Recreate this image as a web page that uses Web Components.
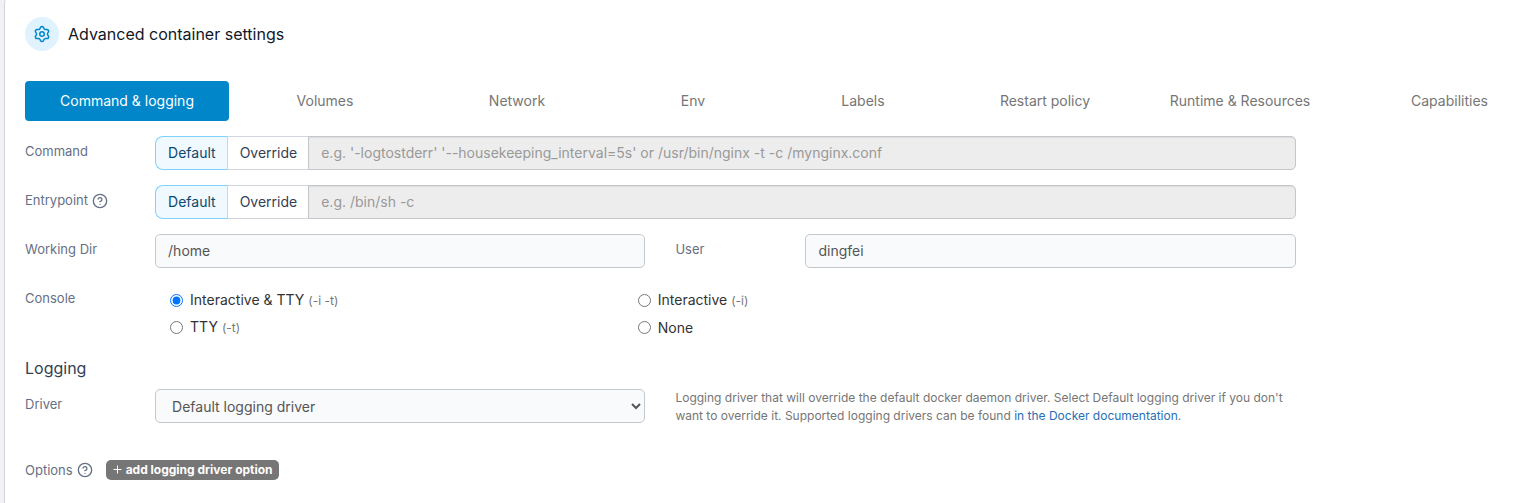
<!DOCTYPE html>
<html lang="en">
<head>
<meta charset="utf-8">
<meta name="viewport" content="width=device-width, initial-scale=1">
<title>Advanced container settings</title>
<style>
  html { --blue: #0086c9; --muted: #767676; --label: #667085; --line: #c4c7cc; --field: #f9fafb; }
  body {
    margin: 0;
    background: #f2f2f4;
    color: #333;
    font: 14px/20px Inter, "Liberation Sans", sans-serif;
    overflow: hidden;
  }
</style>
</head>
<body>
<settings-card>
  <section-title slot="title">Advanced container settings</section-title>
  <tab-strip></tab-strip>
  <form-row><override-field label="Command" placeholder="e.g. '-logtostderr' '--housekeeping_interval=5s' or /usr/bin/nginx -t -c /mynginx.conf"></override-field></form-row>
  <form-row><override-field label="Entrypoint" help placeholder="e.g. /bin/sh -c"></override-field></form-row>
  <form-row>
    <text-field label="Working Dir" value="/home"></text-field>
    <text-field label="User" value="dingfei"></text-field>
  </form-row>
  <form-row><console-field></console-field></form-row>
  <sub-title>Logging</sub-title>
  <form-row>
    <driver-field></driver-field>
    <help-text>Logging driver that will override the default docker daemon driver. Select Default logging driver if you don't want to override it. Supported logging drivers can be found <a href="#docs">in the Docker documentation</a>.</help-text>
  </form-row>
  <options-field></options-field>
</settings-card>

<script>
const define = (name, render, after) => customElements.define(name, class extends HTMLElement {
  connectedCallback() {
    if (this.shadowRoot) return;
    const t = document.createElement('template');
    t.innerHTML = '<style>*{box-sizing:border-box}</style>' + render(this);
    this.attachShadow({ mode: 'open' }).append(t.content.cloneNode(true));
    if (after) after(this.shadowRoot);
  }
});

const fieldStyle = `
  label, .label { font-size: 13px; line-height: 20px; color: var(--label); padding: 5px 15px 0; display: flex; align-items: flex-start; gap: 4px; white-space: nowrap; }
  input:not([type=radio]), select { font: inherit; color: #555; height: 34px; width: 100%; min-width: 0; background: var(--field); border: 1px solid var(--line); border-radius: 5px; padding: 5px 12px 7px; margin: 0; }
  select { padding: 6px 12px; }
  .control { padding: 0 15px; min-width: 0; }
`;

define('help-icon', () => `
  <style>:host{display:block;width:16px;height:16px} svg{display:block}</style>
  <svg width="16" height="16" viewBox="0 0 24 24" fill="none" stroke="#667085" stroke-width="2" stroke-linecap="round" stroke-linejoin="round" aria-hidden="true">
    <circle cx="12" cy="12" r="10"/><path d="M9.09 9a3 3 0 0 1 5.83 1c0 2-3 3-3 3"/><path d="M12 17h.01"/>
  </svg>`);

define('settings-card', () => `
  <style>
    :host{display:block;background:#fff;border:1px solid #d0d5dd;border-radius:8px;margin:-5px -52px 0 4px;padding:21px 20px 60px}
  </style>
  <slot name="title"></slot><slot></slot>`);

define('section-title', () => `
  <style>
    :host{display:flex;align-items:center;gap:9px;color:#101828;font-size:16px;line-height:24px;margin-bottom:30px}
    .badge{width:34px;height:34px;border-radius:50%;background:#e0f2fe;display:grid;place-items:center}
    h2{margin:0;font:inherit}
  </style>
  <span class="badge"><svg width="18" height="18" viewBox="0 0 24 24" fill="none" stroke="#0086c9" stroke-width="2" stroke-linecap="round" stroke-linejoin="round" aria-hidden="true">
    <path d="M9.400 19.400 10 20.700a2.300 2.300 0 0 0 4 0l.6-1.300a2.400 2.400 0 0 1 2.500-1.400l1.400.1a2.200 2.200 0 0 0 2-3.400l-.8-1.200a2.400 2.400 0 0 1 0-2.900l.8-1.200a2.200 2.200 0 0 0-2-3.400l-1.400.1a2.400 2.400 0 0 1-2.500-1.400L14 3.300a2.300 2.300 0 0 0-4 0l-.6 1.400A2.400 2.400 0 0 1 6.900 6.100L5.500 6a2.200 2.200 0 0 0-2 3.400l.8 1.200a2.400 2.400 0 0 1 0 2.900l-.8 1.200a2.200 2.200 0 0 0 2 3.400l1.400-.1a2.400 2.400 0 0 1 2.500 1.400Z"/><circle cx="12" cy="12" r="3"/>
  </svg></span>
  <h2><slot></slot></h2>`);

define('tab-strip', () => `
  <style>
    :host{display:grid;grid-template-columns:204fr 192fr 192fr 160fr 180fr 184fr 206fr 213fr;margin-bottom:15px}
    button{font:inherit;height:40px;padding:0;border:0;background:none;color:var(--muted);border-radius:4px;white-space:nowrap}
    button[aria-selected=true]{background:var(--blue);color:#fff}
  </style>` + ['Command & logging','Volumes','Network','Env','Labels','Restart policy','Runtime & Resources','Capabilities']
    .map((t, i) => `<button type="button" role="tab" aria-selected="${i === 0}">${t.replace('&', '&amp;')}</button>`).join(''),
  root => root.host.setAttribute('role', 'tablist'));

define('form-row', () => `
  <style>:host{display:grid;grid-template-columns:repeat(12,minmax(0,1fr));margin:0 -15px 15px}</style><slot></slot>`);

define('override-field', h => `
  <style>${fieldStyle}
    :host{grid-column:span 10;display:grid;grid-template-columns:minmax(0,1fr) minmax(0,9fr)}
    .group{display:flex}
    button{font:inherit;height:34px;padding:0 11px 0 12px;border:1px solid #d0d5dd;background:#fff;color:#344054;margin-left:-1px}
    button[aria-pressed=true]{margin:0;background:#f0f9ff;border-color:#7cd4fd;border-right-color:#d0d5dd;color:#0b4a6f;border-radius:8px 0 0 8px}
    .group input{flex:1;width:auto;background:#ededed;border-radius:0 5px 5px 0;margin-left:-1px;box-shadow:inset 0 1px 1px rgba(0,0,0,.075)}
    input::placeholder{color:#999;opacity:1}
    help-icon{margin-top:3px}
  </style>
  <label for="f">${h.getAttribute('label')}${h.hasAttribute('help') ? '<help-icon></help-icon>' : ''}</label>
  <div class="control group"><button type="button" aria-pressed="true">Default</button><button type="button" aria-pressed="false">Override</button><input id="f" disabled></div>`,
  root => { root.querySelector('input').placeholder = root.host.getAttribute('placeholder'); });

define('text-field', h => `
  <style>${fieldStyle}
    :host{grid-column:span 5;display:grid;grid-template-columns:minmax(0,1fr) minmax(0,4fr)}
  </style>
  <label for="f">${h.getAttribute('label')}</label>
  <div class="control"><input id="f" type="text" value="${h.getAttribute('value')}"></div>`);

define('console-field', () => `
  <style>${fieldStyle}
    :host{grid-column:span 10;display:grid;grid-template-columns:minmax(0,1fr) minmax(0,9fr);margin-bottom:3px}
    .radios{display:grid;grid-template-columns:41% 41%;row-gap:6px;padding-top:7px}
    .radios label{font-size:14px;color:#333;padding:0 15px;gap:7px;align-items:center}
    .radios input{margin:0;width:13px;height:13px}
    small{font-size:12px;color:var(--muted)}
  </style>
  <span class="label" id="g">Console</span>
  <div class="control radios" role="radiogroup" aria-labelledby="g">
    <label><input type="radio" name="console" checked><span>Interactive &amp; TTY <small>(-i -t)</small></span></label>
    <label><input type="radio" name="console"><span>Interactive <small>(-i)</small></span></label>
    <label><input type="radio" name="console"><span>TTY <small>(-t)</small></span></label>
    <label><input type="radio" name="console"><span>None</span></label>
  </div>`);

define('sub-title', () => `
  <style>:host{display:block;font-size:16px;line-height:24px;color:#344054;margin-bottom:9px} h3{margin:0;font:inherit}</style>
  <h3><slot></slot></h3>`);

define('driver-field', () => `
  <style>${fieldStyle}
    :host{grid-column:span 5;display:grid;grid-template-columns:minmax(0,1fr) minmax(0,4fr)}
  </style>
  <label for="f">Driver</label>
  <div class="control"><select id="f"><option>Default logging driver</option></select></div>`);

define('help-text', () => `
  <style>
    :host{grid-column:span 5;padding:0 15px;font-size:12px;line-height:18px;color:var(--muted)}
    ::slotted(a){color:#286fb4;text-decoration:none}
  </style>
  <slot></slot>`);

define('options-field', () => `
  <style>
    :host{display:flex;align-items:center;margin-top:35px;font-size:13px;color:var(--label)}
    help-icon{margin:0 13px 0 4px}
    button{display:flex;align-items:center;gap:4px;height:20px;border:0;border-radius:5px;background:var(--muted);color:#fff;font:700 12px/20px Inter,"Liberation Sans",sans-serif;padding:0 6px}
    svg{margin-bottom:2px}
  </style>
  <span>Options</span><help-icon></help-icon>
  <button type="button"><svg width="10" height="10" viewBox="0 0 10 10" stroke="#fff" aria-hidden="true"><path d="M5.500 1.500v8M1.500 5.500h8"/></svg>add logging driver option</button>`);
</script>
</body>
</html>
